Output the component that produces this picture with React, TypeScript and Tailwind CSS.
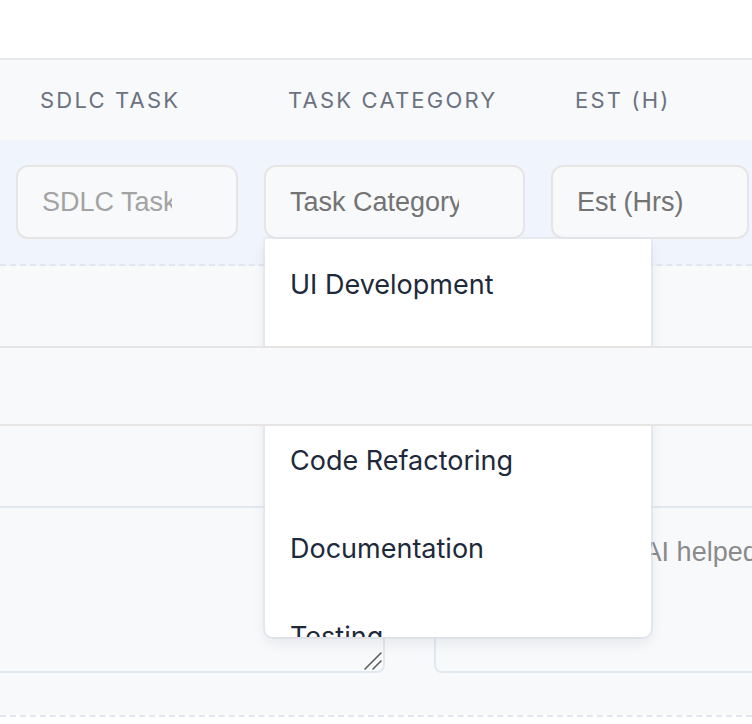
import { useState } from "react";

const categories = [
  "UI Development",
  "API Integration",
  "Code Refactoring",
  "Documentation",
  "Testing",
  "Deployment",
];

const inputCls =
  "h-[74px] w-full rounded-xl border-2 border-[#e7e5e4] bg-[#f8f9fb] pl-6 pr-[64px] text-[27px] outline-none [font-family:'Liberation_Sans',Arial,sans-serif]";

const App = () => {
  const [open] = useState(true);

  return (
    <div className="min-h-screen w-full overflow-hidden bg-white [font-family:Inter,'Noto_Sans',sans-serif]">
      <div className="h-[60px] border-b-2 border-[#e5e7eb] bg-white" />

      {/* column headings */}
      <div className="grid h-[80px] grid-cols-[222px_261px_198px] items-center gap-x-[26px] bg-[#f8f9fb] pl-4">
        <div className="pl-6 text-[22px] font-normal uppercase tracking-[0.1em] text-[#6b7280]">SDLC Task</div>
        <div className="pl-6 text-[22px] font-normal uppercase tracking-[0.1em] text-[#6b7280]">Task Category</div>
        <div className="pl-6 text-[22px] font-normal uppercase tracking-[0.1em] text-[#6b7280]">Est (H)</div>
      </div>

      {/* new entry row */}
      <div className="grid grid-cols-[222px_261px_198px] gap-x-[26px] border-b-2 border-dashed border-[#e2e6ee] bg-[#f0f4fd] py-[25px] pl-4">
        <input className={`${inputCls} placeholder:text-[#a3a3a3]`} placeholder="SDLC Task" />
        <div className="relative">
          <input className={`${inputCls} placeholder:text-[#737373]`} placeholder="Task Category" />
          {open && (
            <ul className="absolute left-px top-full z-10 h-[398px] w-[386px] overflow-hidden rounded-b-lg bg-white pt-[2px] shadow-[0_6px_14px_rgba(15,23,42,0.08),0_0_0_2px_rgba(226,232,240,0.55)]">
              {categories.map((c) => (
                <li key={c} className="flex h-[88px] shrink-0 items-center px-[25px] text-[27px] text-[#1e293b]">
                  {c}
                </li>
              ))}
            </ul>
          )}
        </div>
        <input className={`${inputCls} placeholder:text-[#737373]`} placeholder="Est (Hrs)" />
      </div>

      <div className="h-[80px] bg-[#f8f9fb]" />

      {/* saved row strip */}
      <div className="relative z-20 h-[80px] border-y-2 border-[#e7e5e4] bg-[#f8f9fb]" />

      <div className="bg-[#f8f9fb] pt-[80px] pb-[42px]">
        <div className="-ml-[300px] flex gap-[49px]">
          <div className="relative h-[167px] w-[685px] shrink-0">
            <textarea className="h-full w-full resize-none rounded-lg border-2 border-[#e2e8f0] bg-[#f8f9fb] outline-none" />
            <svg className="pointer-events-none absolute bottom-[3px] right-[3px]" width="18" height="18" viewBox="0 0 18 18">
              <path d="M1 17 L17 1 M9 17 L17 9" stroke="#5b5b5b" strokeWidth="1.6" strokeLinecap="round" />
            </svg>
          </div>
          <textarea
            className="h-[167px] w-[500px] shrink-0 resize-none rounded-lg border-2 border-[#e2e8f0] bg-[#f8f9fb] pl-8 pr-6 pt-[29px] text-[27px] leading-[30px] outline-none placeholder:text-[#8a8a8a] [font-family:'Liberation_Sans',Arial,sans-serif]"
            placeholder="Explain where AI helped..."
          />
        </div>
      </div>

      <div className="h-[10px] border-t-2 border-dashed border-[#e2e6ee] bg-white" />
    </div>
  );
};

export default App;
